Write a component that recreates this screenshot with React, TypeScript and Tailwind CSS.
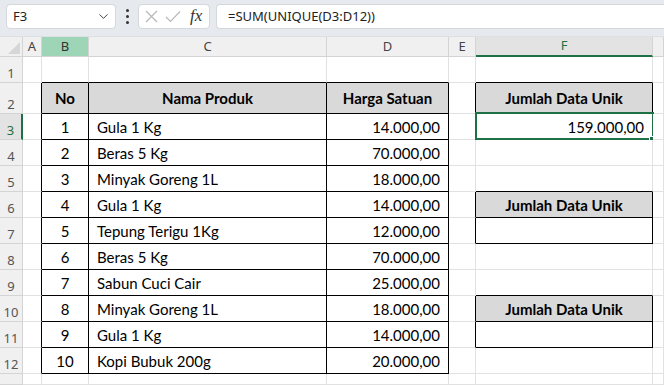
import React from "react";
import { ChevronDown } from "lucide-react";

const COLS = ["A", "B", "C", "D", "E", "F", ""];
const data: [string, string, string][] = [
  ["1", "Gula 1 Kg", "14.000,00"],
  ["2", "Beras 5 Kg", "70.000,00"],
  ["3", "Minyak Goreng 1L", "18.000,00"],
  ["4", "Gula 1 Kg", "14.000,00"],
  ["5", "Tepung Terigu 1Kg", "12.000,00"],
  ["6", "Beras 5 Kg", "70.000,00"],
  ["7", "Sabun Cuci Cair", "25.000,00"],
  ["8", "Minyak Goreng 1L", "18.000,00"],
  ["9", "Gula 1 Kg", "14.000,00"],
  ["10", "Kopi Bubuk 200g", "20.000,00"],
];

function isTable(r: number, c: number) {
  if (c >= 1 && c <= 3 && r >= 2 && r <= 12) return true;
  if (c === 5 && [2, 3, 6, 7, 10, 11].includes(r)) return true;
  return false;
}
function isHeader(r: number, c: number) {
  if (r === 2 && c >= 1 && c <= 3) return true;
  if (c === 5 && [2, 6, 10].includes(r)) return true;
  return false;
}

function cellContent(r: number, c: number): { text: string; align: string; bold?: boolean } | null {
  if (r === 2 && c === 1) return { text: "No", align: "justify-center", bold: true };
  if (r === 2 && c === 2) return { text: "Nama Produk", align: "justify-center", bold: true };
  if (r === 2 && c === 3) return { text: "Harga Satuan", align: "justify-center", bold: true };
  if (c === 5 && [2, 6, 10].includes(r)) return { text: "Jumlah Data Unik", align: "justify-center", bold: true };
  if (r === 3 && c === 5) return { text: "159.000,00", align: "justify-end pr-[8px]" };
  if (r >= 3 && r <= 12) {
    const d = data[r - 3];
    if (c === 1) return { text: d[0], align: "justify-center" };
    if (c === 2) return { text: d[1], align: "justify-start pl-[8px]" };
    if (c === 3) return { text: d[2], align: "justify-end pr-[8px]" };
  }
  return null;
}

export default function App() {
  const rows = Array.from({ length: 13 }, (_, i) => i + 1);
  return (
    <div className="w-[664px] h-[385px] overflow-hidden bg-white font-['Noto_Sans',sans-serif]">
      {/* formula bar */}
      <div className="h-[37px] bg-[#e6e9ed] flex items-start pt-[4px] pl-[6px] border-b border-[#dcdfe3]">
        <div className="w-[110px] h-[25px] bg-white rounded-[4px] border border-[#d4d7db] flex items-center pl-[6px] pr-[4px] text-[13px] text-[#222]">
          <span className="flex-1">F3</span>
          <ChevronDown size={15} strokeWidth={1.6} className="text-[#444]" />
        </div>
        <div className="w-[22px] h-[25px] flex flex-col items-center justify-center gap-[3px]">
          <div className="w-[3px] h-[3px] rounded-full bg-[#333]" />
          <div className="w-[3px] h-[3px] rounded-full bg-[#333]" />
          <div className="w-[3px] h-[3px] rounded-full bg-[#333]" />
        </div>
        <div className="w-[72px] h-[25px] bg-white rounded-[4px] border border-[#d4d7db] flex items-center pl-[6px] gap-[7px]">
          <svg width="13" height="13" viewBox="0 0 13 13">
            <path d="M1 1 L12 12 M12 1 L1 12" stroke="#b8b8b8" strokeWidth="1.2" fill="none" />
          </svg>
          <svg width="16" height="13" viewBox="0 0 16 13">
            <path d="M1 7 L5.5 11.5 L15 1.5" stroke="#b8b8b8" strokeWidth="1.2" fill="none" />
          </svg>
          <span className="font-['Liberation_Serif',serif] italic text-[17px] leading-none text-[#333] ml-[2px] -mt-[2px]">fx</span>
        </div>
        <div className="ml-[6px] flex-1 h-[25px] bg-white rounded-l-[4px] border border-r-0 border-[#d4d7db] flex items-center pl-[11px] text-[13px] text-[#222]">
          =SUM(UNIQUE(D3:D12))
        </div>
      </div>

      {/* grid */}
      <div className="grid grid-cols-[23px_19px_47px_238px_122px_27px_177px_1fr] grid-rows-[20px_26px_31px_repeat(10,26px)_11px]">
        <div className="bg-[#f0f0f0] border-r border-b border-[#d4d4d4] flex items-end justify-end pr-[2px] pb-[2px]">
          <svg width="12" height="12" viewBox="0 0 12 12">
            <path d="M12 0 L12 12 L0 12 Z" fill="#d6d6d6" />
          </svg>
        </div>
        {COLS.map((l, c) => {
          const sel = c === 5;
          const green = c === 1;
          return (
            <div
              key={c}
              className={`flex items-center justify-center text-[13px] border-r border-[#d4d4d4] ${
                green
                  ? "bg-[#9fd5b7] text-[#333] border-b border-b-[#d4d4d4]"
                  : sel
                  ? "bg-[#e3e3e3] text-[#1e7145] border-b-2 border-b-[#1e7145]"
                  : "bg-[#f0f0f0] text-[#444] border-b border-b-[#d4d4d4]"
              }`}
            >
              {l}
            </div>
          );
        })}
        {rows.map((r) => (
          <React.Fragment key={r}>
            <div
              className={`flex items-end justify-center pb-[2px] text-[13px] leading-none border-b border-[#d4d4d4] ${
                r === 3 ? "bg-[#e3e3e3] text-[#1e7145] border-r-2 border-r-[#1e7145]" : "bg-[#f0f0f0] text-[#555] border-r border-r-[#d4d4d4]"
              }`}
            >
              {r <= 12 ? r : ""}
            </div>
            {COLS.map((_, c) => {
              const t = isTable(r, c);
              const rightBlack = t || isTable(r, c + 1);
              const bottomBlack = t || isTable(r + 1, c);
              const content = cellContent(r, c);
              const isSel = r === 3 && c === 5;
              return (
                <div
                  key={c}
                  className={`relative flex items-center font-['Lato',sans-serif] text-[15px] text-black whitespace-nowrap border-r border-b ${
                    rightBlack ? "border-r-black" : "border-r-[#e1e1e1]"
                  } ${bottomBlack ? "border-b-black" : "border-b-[#e1e1e1]"} ${
                    isHeader(r, c) ? "bg-[#d9d9d9]" : "bg-white"
                  } ${content ? content.align : ""} ${content?.bold ? "font-bold" : ""}`}
                >
                  {content ? <span className="pt-[1px]">{content.text}</span> : null}
                  {isSel ? (
                    <>
                      <div className="absolute left-[-1px] top-[-2px] right-[-2px] bottom-[-1px] border-2 border-[#1e7145] pointer-events-none" />
                      <div className="absolute right-[-4px] bottom-[-4px] w-[7px] h-[7px] bg-[#1e7145] border border-white pointer-events-none" />
                    </>
                  ) : null}
                </div>
              );
            })}
          </React.Fragment>
        ))}
      </div>
    </div>
  );
}
